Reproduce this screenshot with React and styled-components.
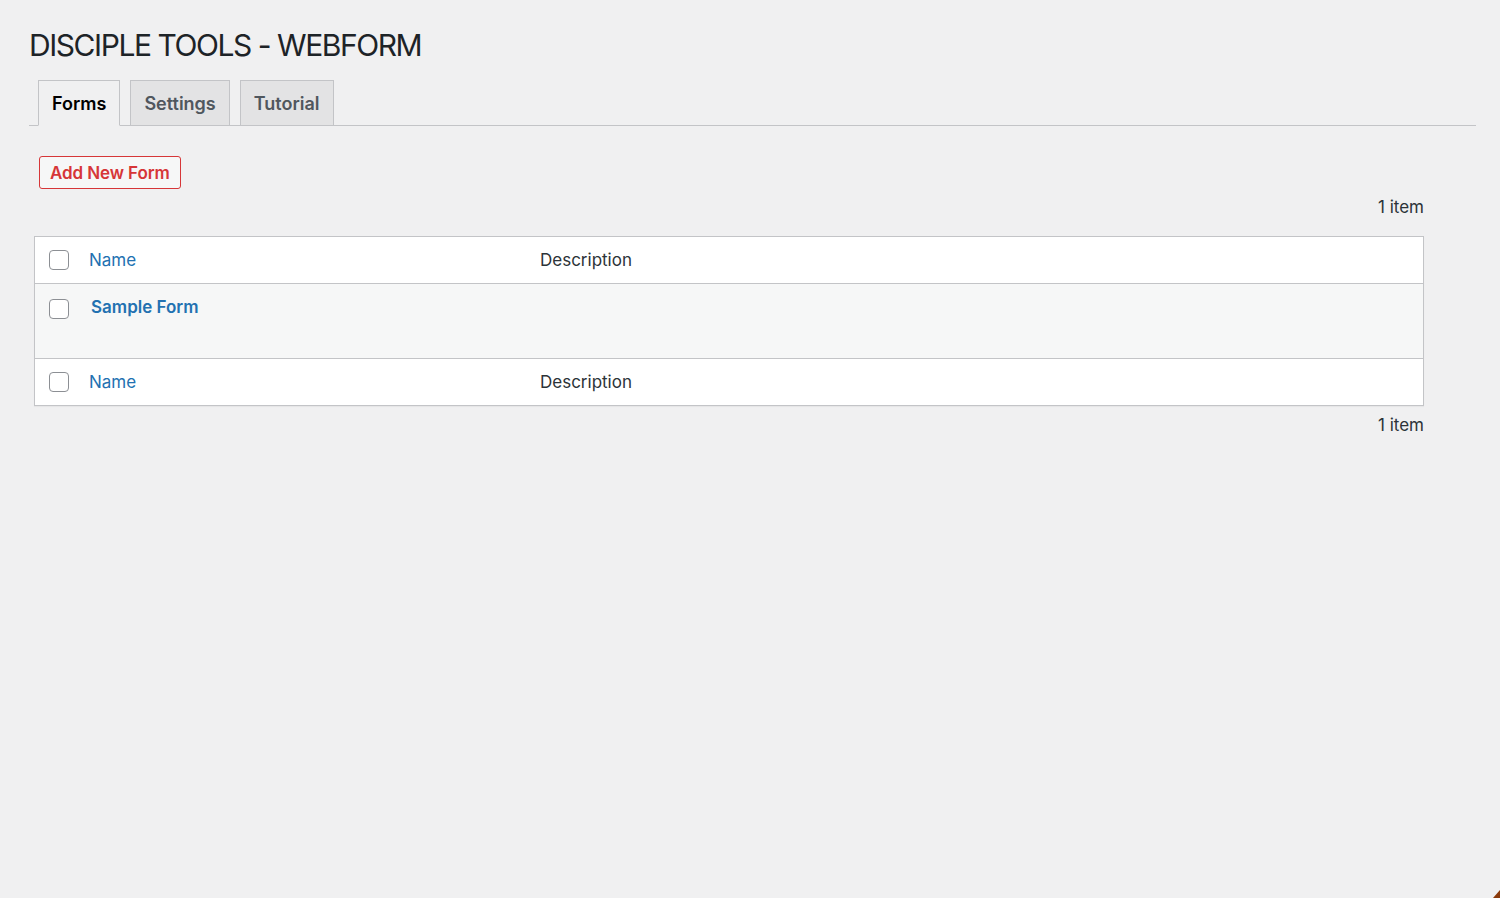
import React from "react";
import styled, { createGlobalStyle } from "styled-components";

const Global = createGlobalStyle`
  html, body { margin: 0; padding: 0; background: #f0f0f1; }
  body {
    font-family: Inter, "Noto Sans", "Liberation Sans", sans-serif;
    color: #3c434a;
    min-height: 898px;
  }
  * { box-sizing: border-box; }
`;

const Wrap = styled.div`
  padding: 26px 24px 0 29px;
  min-height: 898px;
  position: relative;
`;

const Title = styled.h1`
  margin: 0;
  font-size: 30px;
  line-height: 39px;
  font-weight: 400;
  color: #1d2327;
  letter-spacing: -1.45px;
`;

const TabNav = styled.nav`
  display: flex;
  gap: 10px;
  margin-top: 15px;
  padding-left: 9px;
  border-bottom: 1px solid #c3c4c7;
`;

const Tab = styled.a`
  display: flex;
  align-items: center;
  height: 46px;
  padding: 0 13px;
  margin-bottom: -1px;
  font-size: 18px;
  font-weight: 600;
  border: 1px solid #c3c4c7;
  border-bottom-color: ${(p) => (p.$active ? "#f0f0f1" : "#c3c4c7")};
  background: ${(p) => (p.$active ? "#f0f0f1" : "#e3e3e4")};
  color: ${(p) => (p.$active ? "#000" : "#50575e")};
  text-decoration: none;
`;

const Content = styled.div`
  padding: 30px 52px 0 5px;
`;

const RedButton = styled.button`
  height: 33px;
  padding: 0 10px;
  margin-left: 5px;
  font-family: inherit;
  font-size: 17px;
  font-weight: 600;
  letter-spacing: -0.1px;
  color: #d63638;
  background: #f6f7f7;
  border: 1px solid #d63638;
  border-radius: 3px;
`;

const Count = styled.div`
  text-align: right;
  font-size: 17px;
  line-height: 22px;
  color: #2c3338;
  margin: ${(p) => p.$m};
`;

const Table = styled.div`
  border: 1px solid #c3c4c7;
  background: #fff;
  box-shadow: 0 1px 1px rgba(0, 0, 0, 0.04);
`;

const Row = styled.div`
  display: grid;
  grid-template-columns: 54px 451px 1fr;
  align-items: ${(p) => (p.$body ? "start" : "center")};
  height: ${(p) => (p.$body ? "75px" : p.$first ? "46px" : "47px")};
  padding-top: ${(p) => (p.$body ? "14px" : "0")};
  background: ${(p) => (p.$body ? "#f6f7f7" : "#fff")};
  border-top: ${(p) => (p.$first ? "none" : "1px solid #c3c4c7")};
`;

const CheckCell = styled.div`
  padding-left: 14px;
  padding-top: ${(p) => (p.$body ? "1px" : "0")};
  display: flex;
  align-items: center;
`;

const Box = styled.span`
  display: block;
  width: 20px;
  height: 20px;
  border: 1.5px solid #8c8f94;
  border-radius: 4px;
  background: #fff;
`;

const HeadLink = styled.a`
  font-size: 17px;
  line-height: 22px;
  color: #2271b1;
  text-decoration: none;
`;

const RowTitle = styled.a`
  display: block;
  padding-left: 2px;
  margin-top: -2px;
  font-size: 17px;
  line-height: 22px;
  font-weight: 600;
  color: #2271b1;
  text-decoration: none;
`;

const HeadText = styled.span`
  font-size: 17px;
  line-height: 22px;
  color: #2c3338;
`;

const Corner = styled.div`
  position: absolute;
  right: 0;
  bottom: 0;
  width: 0;
  height: 0;
  border-left: 7px solid transparent;
  border-bottom: 8px solid #8a3a0c;
`;

function HeaderRow({ first }) {
  return (
    <Row $first={first}>
      <CheckCell><Box /></CheckCell>
      <div><HeadLink href="#">Name</HeadLink></div>
      <div><HeadText>Description</HeadText></div>
    </Row>
  );
}

export default function App() {
  return (
    <>
      <Global />
      <Wrap>
        <Title>DISCIPLE TOOLS - WEBFORM</Title>
        <TabNav>
          <Tab $active href="#">Forms</Tab>
          <Tab href="#">Settings</Tab>
          <Tab href="#">Tutorial</Tab>
        </TabNav>
        <Content>
          <RedButton>Add New Form</RedButton>
          <Count $m="7px 0 18px">1 item</Count>
          <Table>
            <HeaderRow first />
            <Row $body>
              <CheckCell $body><Box /></CheckCell>
              <div><RowTitle href="#">Sample Form</RowTitle></div>
              <div />
            </Row>
            <HeaderRow />
          </Table>
          <Count $m="8px 0 0">1 item</Count>
        </Content>
        <Corner />
      </Wrap>
    </>
  );
}
